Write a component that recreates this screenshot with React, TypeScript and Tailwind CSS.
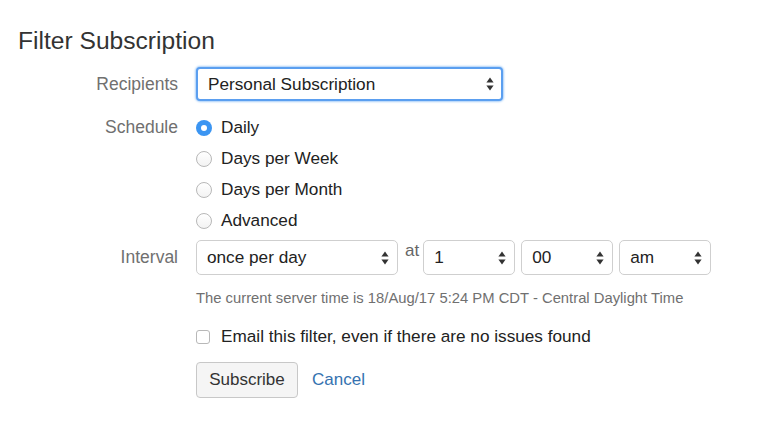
import React from 'react'

const font = { fontFamily: '"Liberation Sans", Arial, sans-serif' }

const Arrows = () => (
    <svg width="8" height="14" viewBox="0 0 8 14" className="pointer-events-none absolute right-[9px] top-1/2 -translate-y-1/2">
        <path d="M4 0.5 L7.6 5.6 L0.4 5.6 Z" fill="#333" />
        <path d="M4 13.5 L7.6 8.4 L0.4 8.4 Z" fill="#333" />
    </svg>
)

const Select = ({ options, className, focused }: { options: string[]; className: string; focused?: boolean }) => (
    <div className={`relative ${className}`}>
        <select
            defaultValue={options[0]}
            className={`h-full w-full appearance-none bg-white pl-[10px] pt-[1px] text-[17.2px] text-[#222] outline-none ${focused
                ? 'rounded-[4px] border-2 border-[#5b9ff0] shadow-[0_0_2px_1px_#a9cff8]'
                : 'rounded-[5px] border border-[#cfcfcf]'
                }`}
            style={font}
        >
            {options.map(o => <option key={o}>{o}</option>)}
        </select>
        <Arrows />
    </div>
)

const Radio = ({ label, checked }: { label: string; checked?: boolean }) => (
    <label className="flex h-[31px] items-center gap-[9px]">
        {checked ? (
            <span className="flex h-[16px] w-[16px] items-center justify-center rounded-full bg-[#3b95f2]">
                <span className="h-[6px] w-[6px] rounded-full bg-white" />
            </span>
        ) : (
            <span className="h-[16px] w-[16px] rounded-full border border-[#b8b8b8] bg-gradient-to-b from-white to-[#f3f3f3]" />
        )}
        <span className="text-[17.2px] text-[#222]">{label}</span>
    </label>
)

const App = () => {
    return (
        <div className="min-h-screen bg-white pl-[18px] pt-[27px] text-[#333]" style={font}>
            {/* title */}
            <h1 className="text-[24.6px] leading-[28px] text-[#333]">Filter Subscription</h1>

            <div className="mt-[12px] grid grid-cols-[160px_1fr] gap-x-[18px]">
                {/* recipients */}
                <div className="flex h-[34px] items-center justify-end text-[17.5px] text-[#707070]">Recipients</div>
                <Select options={['Personal Subscription']} className="h-[34px] w-[307px]" focused />

                {/* schedule */}
                <div className="mt-[11px] flex h-[31px] items-center justify-end text-[17.5px] text-[#707070]">Schedule</div>
                <div className="mt-[11px] flex flex-col">
                    <Radio label="Daily" checked />
                    <Radio label="Days per Week" />
                    <Radio label="Days per Month" />
                    <Radio label="Advanced" />
                </div>

                {/* interval */}
                <div className="mt-[4px] flex h-[35px] items-center justify-end text-[17.5px] text-[#707070]">Interval</div>
                <div className="mt-[4px] flex h-[35px]">
                    <Select options={['once per day']} className="h-[35px] w-[202px]" />
                    <span className="ml-[7px] mr-[4px] mt-[2px] text-[17px] leading-[18px] text-[#666]">at</span>
                    <Select options={['1']} className="h-[35px] w-[92px]" />
                    <Select options={['00']} className="ml-[6px] h-[35px] w-[92px]" />
                    <Select options={['am']} className="ml-[6px] h-[35px] w-[92px]" />
                </div>

                <div />
                <div className="mt-[14px] text-[14.8px] leading-[18px] text-[#707070]">
                    The current server time is 18/Aug/17 5:24 PM CDT - Central Daylight Time
                </div>

                <div />
                <label className="mt-[18px] flex h-[24px] items-center gap-[11px]">
                    <span className="h-[14px] w-[14px] rounded-[3px] border border-[#b8b8b8] bg-white" />
                    <span className="text-[17.2px] text-[#222]">Email this filter, even if there are no issues found</span>
                </label>

                <div />
                <div className="mt-[13px] flex items-center gap-[14px]">
                    <button className="h-[36px] w-[102px] rounded-[4px] border border-[#c8c8c8] bg-[#f5f5f5] text-[17px] text-[#333]">
                        Subscribe
                    </button>
                    <a href="#" className="text-[17px] text-[#3572b0]">Cancel</a>
                </div>
            </div>
        </div>
    )
}

export default App
